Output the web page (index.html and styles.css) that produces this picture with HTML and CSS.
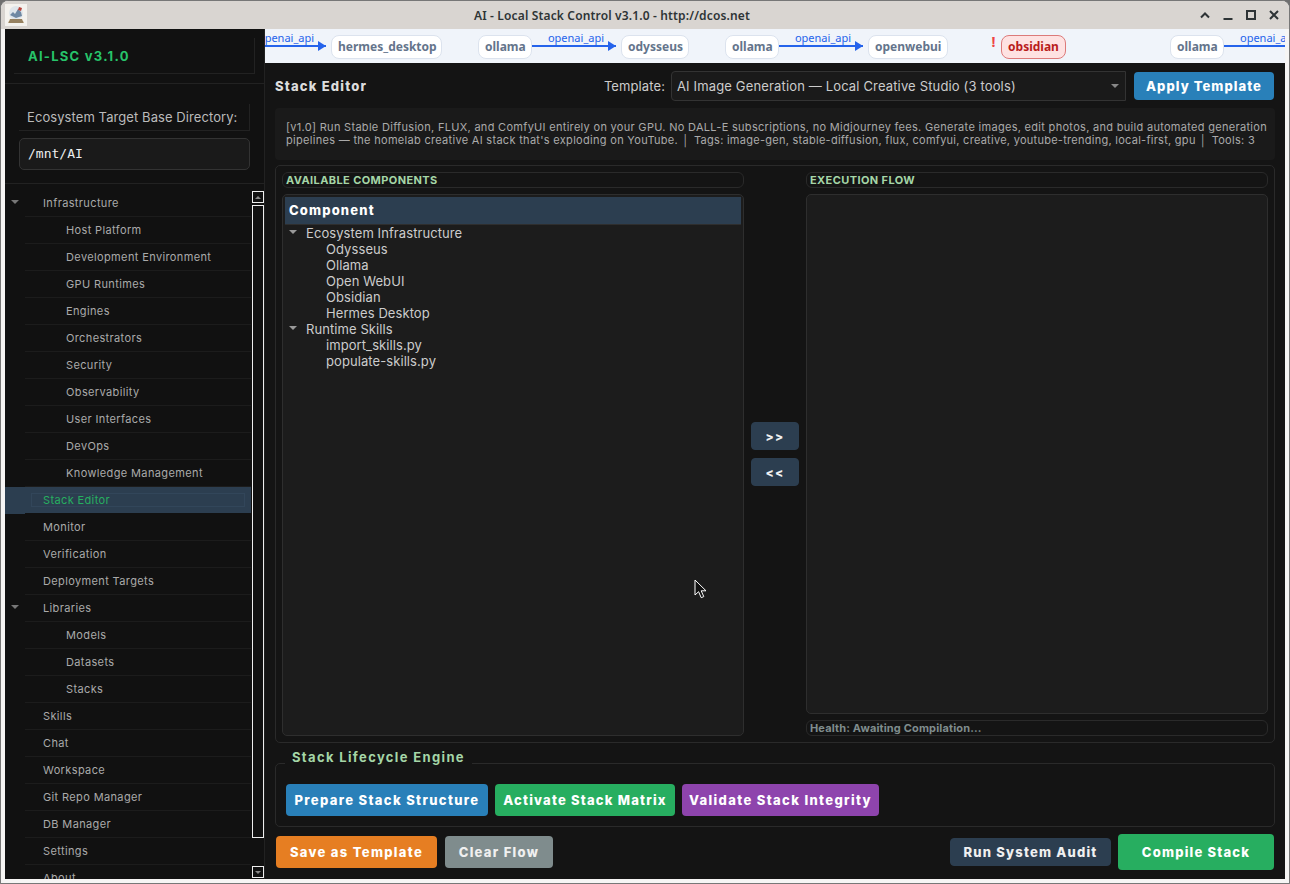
FILE: index.html
```html
<!DOCTYPE html>
<html lang="en">
<head>
<meta charset="utf-8">
<title>AI - Local Stack Control v3.1.0</title>
<link rel="stylesheet" href="styles.css">
</head>
<body>
<div class="window">
  <header class="titlebar">
    <svg class="app-icon" width="22" height="22" viewBox="0 0 22 22">
      <rect width="22" height="22" fill="#f4f2ee"/>
      <circle cx="11" cy="9" r="7" fill="#dfe5ea"/>
      <path d="M5 11l3-3 2 2 3-5 3 3 1 4-6 2z" fill="#6f88a3"/>
      <path d="M14 3l3 1-1 3-3-1z" fill="#b8433a"/>
      <path d="M3 19l2-4h12l2 4z" fill="#b09a76"/>
      <path d="M5 16h12M4 18h14" stroke="#7d684a" stroke-width="1"/>
    </svg>
    <div class="title">AI - Local Stack Control v3.1.0 - http://dcos.net</div>
    <div class="win-controls">
      <svg width="12" height="12" viewBox="0 0 12 12"><path d="M2 8.5L6 4.5l4 4" fill="none" stroke="#2e3436" stroke-width="2"/></svg>
      <svg width="12" height="12" viewBox="0 0 12 12"><path d="M1.5 10h9" fill="none" stroke="#2e3436" stroke-width="2"/></svg>
      <svg width="12" height="12" viewBox="0 0 12 12"><rect x="2" y="2" width="8" height="8" fill="none" stroke="#2e3436" stroke-width="2"/></svg>
      <svg width="12" height="12" viewBox="0 0 12 12"><path d="M2 2l8 8M10 2l-8 8" fill="none" stroke="#2e3436" stroke-width="2"/></svg>
    </div>
  </header>

  <div class="client">
    <aside class="sidebar">
      <div class="brand-wrap"><div class="brand">AI-LSC v3.1.0</div></div>
      <div class="target">
        <div class="target-label">Ecosystem Target Base Directory:</div>
        <div class="target-input">/mnt/AI</div>
      </div>
      <div class="nav-wrap">
        <nav class="nav">
          <div class="row"><span class="tri"></span><span class="t1">Infrastructure</span></div>
          <div class="row"><span class="t2">Host Platform</span></div>
          <div class="row"><span class="t2">Development Environment</span></div>
          <div class="row"><span class="t2">GPU Runtimes</span></div>
          <div class="row"><span class="t2">Engines</span></div>
          <div class="row"><span class="t2">Orchestrators</span></div>
          <div class="row"><span class="t2">Security</span></div>
          <div class="row"><span class="t2">Observability</span></div>
          <div class="row"><span class="t2">User Interfaces</span></div>
          <div class="row"><span class="t2">DevOps</span></div>
          <div class="row"><span class="t2">Knowledge Management</span></div>
          <div class="row selected"><span class="t1">Stack Editor</span><span class="focus-box"></span></div>
          <div class="row"><span class="t1">Monitor</span></div>
          <div class="row"><span class="t1">Verification</span></div>
          <div class="row"><span class="t1">Deployment Targets</span></div>
          <div class="row"><span class="tri"></span><span class="t1">Libraries</span></div>
          <div class="row"><span class="t2">Models</span></div>
          <div class="row"><span class="t2">Datasets</span></div>
          <div class="row"><span class="t2">Stacks</span></div>
          <div class="row"><span class="t1">Skills</span></div>
          <div class="row"><span class="t1">Chat</span></div>
          <div class="row"><span class="t1">Workspace</span></div>
          <div class="row"><span class="t1">Git Repo Manager</span></div>
          <div class="row"><span class="t1">DB Manager</span></div>
          <div class="row"><span class="t1">Settings</span></div>
          <div class="row"><span class="t1">About</span></div>
        </nav>
        <div class="scrollbar">
          <div class="sb-btn"><span class="sb-up"></span></div>
          <div class="sb-thumb"></div>
          <div class="sb-btn"><span class="sb-down"></span></div>
        </div>
      </div>
    </aside>

    <main class="main">
      <div class="flow-strip">
        <div class="edge e0"><span class="edge-label">openai_api</span><span class="edge-line arrow"></span></div>
        <span class="node n-hermes">hermes_desktop</span>
        <span class="node n-ollama1">ollama</span>
        <div class="edge e1"><span class="edge-label">openai_api</span><span class="edge-line arrow"></span></div>
        <span class="node n-odysseus">odysseus</span>
        <span class="node n-ollama2">ollama</span>
        <div class="edge e2"><span class="edge-label">openai_api</span><span class="edge-line arrow"></span></div>
        <span class="node n-webui">openwebui</span>
        <span class="bang">!</span>
        <span class="node danger">obsidian</span>
        <span class="node n-ollama3">ollama</span>
        <div class="edge e3"><span class="edge-label">openai_api</span><span class="edge-line"></span></div>
      </div>

      <div class="content">
        <div class="editor-head">
          <h1 class="page-title">Stack Editor</h1>
          <div class="spacer"></div>
          <span class="tpl-label">Template:</span>
          <div class="select"><span>AI Image Generation — Local Creative Studio (3 tools)</span><span class="select-arrow"></span></div>
          <button class="btn blue apply">Apply Template</button>
        </div>

        <div class="desc">[v1.0] Run Stable Diffusion, FLUX, and ComfyUI entirely on your GPU. No DALL-E subscriptions, no Midjourney fees. Generate images, edit photos, and build automated generation<br>pipelines — the homelab creative AI stack that's exploding on YouTube.<span class="sep">│</span><span class="tags">Tags: image-gen, stable-diffusion, flux, comfyui, creative, youtube-trending, local-first, gpu</span><span class="sep">│</span>Tools: 3</div>

        <section class="builder">
          <div class="col">
            <div class="pill">AVAILABLE COMPONENTS</div>
            <div class="panel">
              <div class="panel-head">Component</div>
              <div class="tree">
                <div class="tree-row"><span class="tree-tri"></span>Ecosystem Infrastructure</div>
                <div class="tree-row leaf">Odysseus</div>
                <div class="tree-row leaf">Ollama</div>
                <div class="tree-row leaf">Open WebUI</div>
                <div class="tree-row leaf">Obsidian</div>
                <div class="tree-row leaf">Hermes Desktop</div>
                <div class="tree-row"><span class="tree-tri"></span>Runtime Skills</div>
                <div class="tree-row leaf">import_skills.py</div>
                <div class="tree-row leaf">populate-skills.py</div>
              </div>
            </div>
          </div>
          <div class="mid">
            <button class="btn navy move">&gt;&gt;</button>
            <button class="btn navy move">&lt;&lt;</button>
          </div>
          <div class="col">
            <div class="pill">EXECUTION FLOW</div>
            <div class="panel"></div>
            <div class="pill health">Health: Awaiting Compilation...</div>
          </div>
        </section>

        <fieldset class="lifecycle">
          <legend>Stack Lifecycle Engine</legend>
          <button class="btn blue small">Prepare Stack Structure</button>
          <button class="btn green small">Activate Stack Matrix</button>
          <button class="btn purple small">Validate Stack Integrity</button>
        </fieldset>

        <div class="actions">
          <button class="btn orange act">Save as Template</button>
          <button class="btn grey act">Clear Flow</button>
          <div class="spacer"></div>
          <button class="btn navy audit">Run System Audit</button>
          <button class="btn green compile">Compile Stack</button>
        </div>
      </div>
      <svg class="cursor" width="14" height="21" viewBox="0 0 14 21"><path d="M1 1v15l3.6-3.3 2.6 6 2.6-1.1-2.6-5.8H12z" fill="#111" stroke="#fff" stroke-width="1"/></svg>
    </main>
  </div>
</div>
</body>
</html>
```
FILE: styles.css
```css
* { box-sizing: border-box; }
html, body { margin: 0; height: 100%; overflow: hidden; }
body { background: #6f6f6f; font-family: Inter, "Liberation Sans", sans-serif; color: #ddd; }
.window { width: 1290px; height: 884px; display: flex; flex-direction: column; background: #f6f5f4; border: 1px solid #777; border-radius: 8px 8px 0 0; overflow: hidden; }
.titlebar { height: 28px; flex: none; background: #d9d5d1; display: flex; align-items: center; position: relative; padding: 0 4px; }
.app-icon { margin-top: -1px; }
.title { position: absolute; left: 0; right: 66px; text-align: center; font: 600 12px "Noto Sans", sans-serif; letter-spacing: .15px; color: #2e3436; top: 6px; }
.win-controls { margin-left: auto; display: flex; gap: 11px; padding-right: 5px; position: relative; }
.client { flex: 1; min-height: 0; display: flex; margin: 0 4px 4px; }

.sidebar { width: 260px; flex: none; background: #111; border-right: 1px solid #222; display: flex; flex-direction: column; }
.brand-wrap { height: 55px; flex: none; border-bottom: 1px solid #222; padding: 9px; }
.brand { height: 36px; border-right: 1px solid #222; border-bottom: 1px solid #222; color: #27c46a; font-weight: 700; font-size: 13px; letter-spacing: 1.25px; line-height: 36px; padding-left: 14px; }
.target { height: 100px; flex: none; padding: 20px 14px 0; border-bottom: 1px solid #222; }
.target-label { height: 27px; border-right: 1px solid #222; border-bottom: 1px solid #222; font-size: 13px; line-height: 27px; padding-left: 8px; color: #bbb; letter-spacing: .08px; white-space: nowrap; }
.target-input { margin-top: 7px; height: 32px; background: #1a1a1a; border: 1px solid #333; border-radius: 5px; font: 13px/30px "DejaVu Sans Mono", monospace; color: #eee; padding-left: 8px; }
.nav-wrap { flex: 1; min-height: 0; display: flex; overflow: hidden; padding-top: 6px; }
.nav { width: 246px; flex: none; overflow: hidden; }
.row { height: 27px; flex: none; position: relative; display: flex; align-items: center; padding-bottom: 2px; font-size: 11px; letter-spacing: .37px; color: #aaa; white-space: nowrap; }
.row::after { content: ""; position: absolute; left: 20px; right: 0; bottom: 0; height: 1px; background: #1c1c1c; }
.t1 { position: absolute; left: 38px; }
.t2 { position: absolute; left: 61px; }
.tri { position: absolute; left: 6px; top: 10px; border: 4px solid transparent; border-top: 4px solid #777; }
.selected { background: #2c3e50; color: #27ae60; }
.selected::after { background: #111; }
.focus-box { position: absolute; left: 26px; top: 6px; width: 214px; height: 14px; border: 1px solid #32465a; }
.scrollbar { width: 12px; margin: 1px 0 0 1px; flex: none; display: flex; flex-direction: column; gap: 2px; }
.sb-btn { height: 12px; flex: none; border: 1px solid #eee; background: #111; display: flex; align-items: center; justify-content: center; }
.sb-up { border: 3px solid transparent; border-bottom: 3px solid #888; border-top-width: 0; }
.sb-down { border: 3px solid transparent; border-top: 3px solid #888; border-bottom-width: 0; }
.sb-thumb { height: 633px; flex: none; border: 1px solid #eee; background: #111; margin-bottom: 26px; }

.main { flex: 1; min-width: 0; background: #141414; display: flex; flex-direction: column; position: relative; }
.flow-strip { height: 34px; flex: none; background: #f0f4fa; display: flex; align-items: center; padding-top: 2px; overflow: hidden; font-family: "Noto Sans", sans-serif; white-space: nowrap; }
.node { height: 24px; flex: none; border: 1px solid #dce3ee; border-radius: 8px; background: #fff; color: #64748b; font-weight: 700; font-size: 12px; line-height: 22px; padding: 0 6px; text-align: center; }
.edge { flex: none; position: relative; height: 24px; }
.edge-label { position: absolute; top: -3px; left: 0; right: -4px; text-align: center; color: #2563eb; font-size: 11px; line-height: 12px; }
.edge-line { position: absolute; left: 0; right: 0; top: 10px; height: 2px; background: #2563eb; }
.arrow::after { content: ""; position: absolute; right: 0; top: -4px; border-left: 8px solid #2563eb; border-top: 5px solid transparent; border-bottom: 5px solid transparent; }
.e0 { width: 61px; margin-right: 5px; }
.e0 .edge-label { left: -7px; right: auto; }
.e1 { width: 84px; margin-right: 5px; }
.e2 { width: 84px; margin-right: 5px; }
.e3 { width: 70px; }
.e3 .edge-label { left: 16px; right: auto; }
.n-hermes { width: 111px; }
.n-ollama1 { width: 54px; margin-left: 36px; }
.n-odysseus { width: 68px; }
.n-ollama2 { width: 54px; margin-left: 36px; }
.n-webui { width: 80px; }
.bang { width: 9px; margin-left: 41px; color: #ef4444; font-weight: 700; font-size: 14px; text-align: center; margin-top: -12px; flex: none; }
.danger { width: 65px; margin-left: 3px; background: #fee2e2; border-color: #dc7a7a; color: #b91c1c; }
.n-ollama3 { width: 54px; margin-left: 104px; }

.content { flex: 1; min-height: 0; padding: 0 10px; display: flex; flex-direction: column; }
.editor-head { height: 45px; flex: none; display: flex; align-items: center; }
.page-title { margin: 0; font-size: 13px; font-weight: 800; letter-spacing: 1.2px; color: #ddd; }
.spacer { flex: 1; }
.tpl-label { font-size: 13px; color: #ccc; letter-spacing: .1px; margin-right: 6px; }
.select { width: 455px; height: 30px; background: #1a1a1a; border: 1px solid #333; border-radius: 4px 0 0 4px; display: flex; align-items: center; justify-content: space-between; padding: 0 6px 0 5px; font-size: 13px; color: #ccc; letter-spacing: .15px; }
.select-arrow { border: 4px solid transparent; border-top: 4px solid #888; margin-top: 4px; }
.btn { border: 1px solid transparent; border-radius: 4px; color: #fff; font-family: Inter, sans-serif; font-weight: 800; font-size: 13px; padding: 0; flex: none; text-align: center; white-space: nowrap; letter-spacing: 1.2px; }
.blue { background: #2980b9; }
.green { background: #27ae60; }
.purple { background: #8e44ad; }
.orange { background: #e67e22; }
.grey { background: #7f8c8d; color: #f0f0f0; }
.navy { background: #2c3e50; border-color: #2c3e50; color: #f0f0f0; }
.apply { width: 140px; height: 28px; margin: 0 1px 0 8px; letter-spacing: 1.05px; }
.desc { height: 52px; flex: none; background: #1a1a1a; border-radius: 4px; padding: 13px 11px 0; font-size: 11px; line-height: 13px; color: #aaa; letter-spacing: .3px; white-space: nowrap; overflow: hidden; }
.sep { display: inline-block; width: 16px; text-align: center; }
.tags { letter-spacing: .27px; }
.builder { height: 578px; margin-top: 5px; flex: none; border: 1px solid #2a2a2a; border-radius: 5px; padding: 6px; display: flex; }
.col { width: 462px; flex: none; display: flex; flex-direction: column; gap: 6px; }
.mid { width: 62px; flex: none; display: flex; flex-direction: column; align-items: center; justify-content: center; gap: 8px; }
.pill { height: 16px; flex: none; border: 1px solid #2a2a2a; border-radius: 6px; background: #141414; color: #a5d6a7; font-size: 11px; font-weight: 700; line-height: 14px; padding-left: 3px; letter-spacing: .4px; }
.health { color: #7f8c8d; letter-spacing: .15px; }
.panel { flex: 1; min-height: 0; background: #1c1c1c; border: 1px solid #2e2e2e; border-radius: 5px; padding: 2px; }
.panel-head { height: 27px; background: #2c3e50; color: #fff; font-weight: 800; font-size: 13px; letter-spacing: 1.15px; line-height: 27px; padding-left: 4px; }
.tree { border-top: 1px solid #2e2e2e; }
.tree-row { height: 16px; font-size: 13px; line-height: 16px; color: #ccc; padding-left: 21px; position: relative; letter-spacing: .08px; white-space: nowrap; }
.tree-row.leaf { padding-left: 41px; }
.tree-tri { position: absolute; left: 4px; top: 5px; border: 4px solid transparent; border-top: 4px solid #999; }
.move { width: 48px; height: 28px; font-size: 12px; }
.lifecycle { margin: 20px 0 0; height: 64px; flex: none; border: 1px solid #2a2a2a; border-radius: 5px; padding: 0 10px; display: flex; align-items: flex-start; gap: 7px; position: relative; min-width: 0; }
.lifecycle legend { position: absolute; left: 0; top: -14px; margin-left: 9px; padding: 0 7px; height: 14px; font-size: 13px; font-weight: 700; color: #a5d6a7; letter-spacing: 1.35px; line-height: 14px; background: #141414; }
.small { height: 32px; margin-top: 20px; letter-spacing: 1.35px; }
.lifecycle .blue { width: 202px; }
.lifecycle .green { width: 180px; letter-spacing: 1.2px; }
.lifecycle .purple { width: 197px; }
.actions { flex: none; display: flex; align-items: center; margin-top: 7px; height: 36px; }
.act { height: 32px; letter-spacing: 1.3px; }
.orange.act { width: 161px; margin-left: 1px; }
.grey.act { width: 108px; margin-left: 8px; }
.audit { width: 161px; height: 28px; }
.compile { width: 156px; height: 36px; margin: 0 1px 0 7px; }
.cursor { position: absolute; left: 429px; top: 550px; }
```
